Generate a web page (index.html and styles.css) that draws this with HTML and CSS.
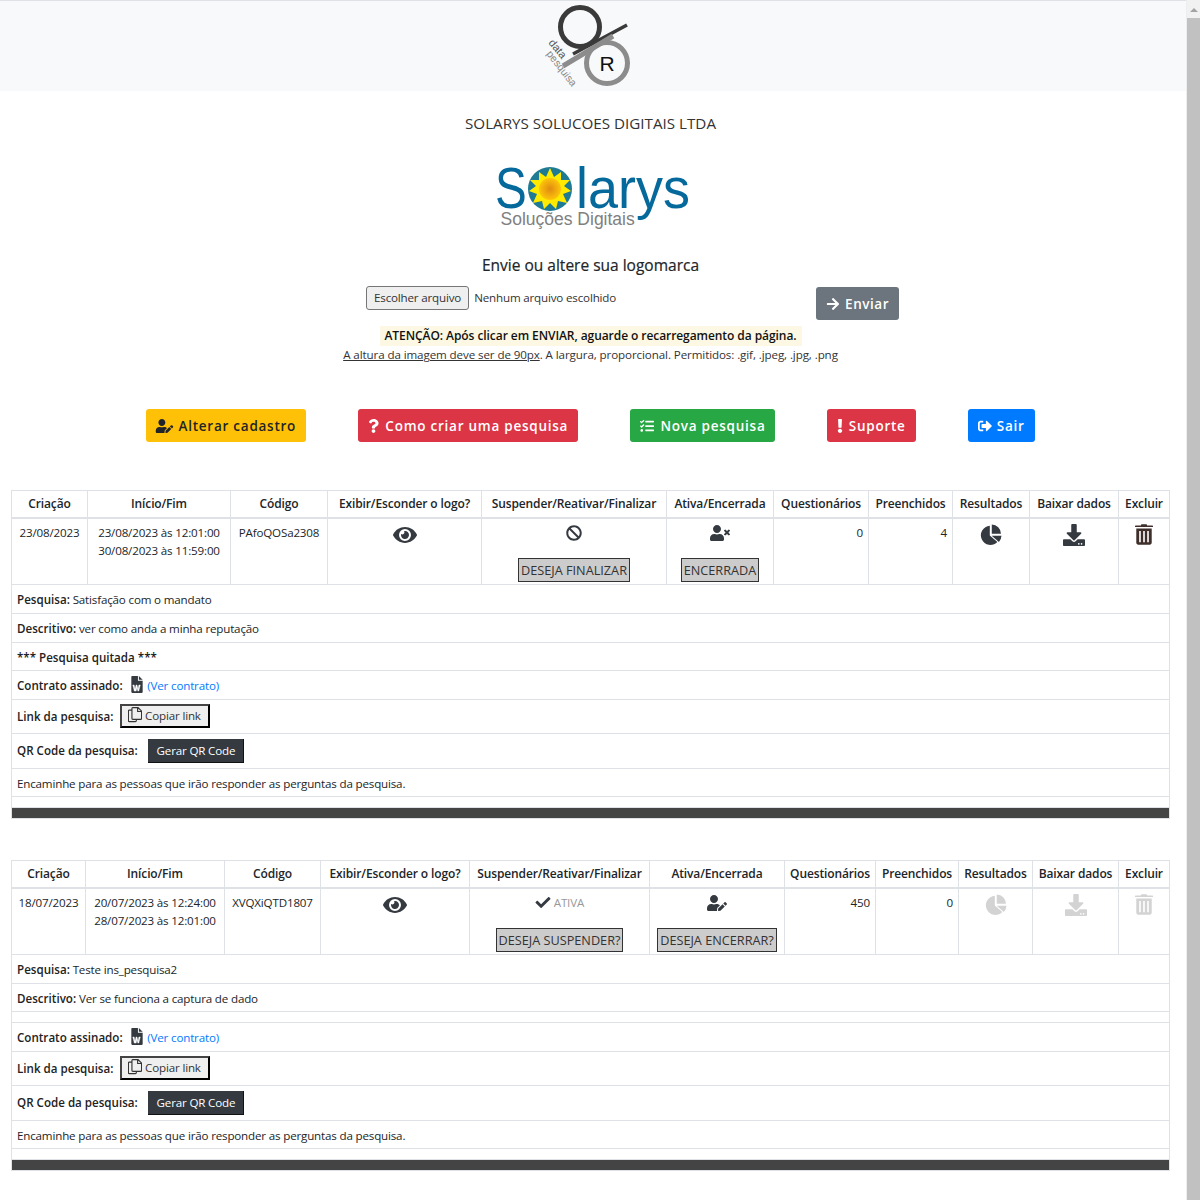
FILE: index.html
```html
<!DOCTYPE html>
<html lang="pt-BR">
<head>
    <meta charset="UTF-8">
    <title>Pesquisas</title>
    <link rel="stylesheet" href="styles.css">
</head>
<body>
    <svg class="icon-defs" width="0" height="0">
        <defs>
            <symbol id="i-eye" viewBox="0 0 576 512"><path d="M572.52 241.4C518.29 135.59 410.93 64 288 64S57.68 135.64 3.48 241.41a32.35 32.35 0 0 0 0 29.19C57.71 376.41 165.07 448 288 448s230.32-71.64 284.52-177.41a32.35 32.35 0 0 0 0-29.19zM288 400a144 144 0 1 1 144-144 143.93 143.93 0 0 1-144 144zm0-240a95.31 95.31 0 0 0-25.31 3.79 47.85 47.85 0 0 1-66.9 66.9A95.78 95.78 0 1 0 288 160z"/></symbol>
            <symbol id="i-ban" viewBox="0 0 512 512"><path d="M256 8C119.034 8 8 119.033 8 256s111.034 248 248 248 248-111.034 248-248S392.967 8 256 8zm130.108 117.892c65.448 65.448 70 165.481 20.677 235.637L150.47 105.216c70.204-49.356 170.226-44.735 235.638 20.676zM125.892 386.108c-65.448-65.448-70-165.481-20.677-235.637L361.53 406.784c-70.203 49.356-170.226 44.736-235.638-20.676z"/></symbol>
            <symbol id="i-user-times" viewBox="0 0 640 512"><path d="M589.6 240l45.6-45.6c6.3-6.3 6.3-16.5 0-22.8l-22.8-22.8c-6.3-6.3-16.5-6.3-22.8 0L544 194.4l-45.6-45.6c-6.3-6.3-16.5-6.3-22.8 0l-22.8 22.8c-6.3 6.3-6.3 16.5 0 22.8l45.6 45.6-45.6 45.6c-6.3 6.3-6.3 16.5 0 22.8l22.8 22.8c6.3 6.3 16.5 6.3 22.8 0l45.6-45.6 45.6 45.6c6.3 6.3 16.5 6.3 22.8 0l22.8-22.8c6.3-6.3 6.3-16.5 0-22.8L589.6 240zM224 256c70.7 0 128-57.3 128-128S294.7 0 224 0 96 57.3 96 128s57.3 128 128 128zm89.6 32h-16.7c-22.2 10.2-46.9 16-72.9 16s-50.6-5.8-72.9-16h-16.7C60.2 288 0 348.2 0 422.4V464c0 26.5 21.5 48 48 48h352c26.5 0 48-21.5 48-48v-41.6c0-74.2-60.2-134.4-134.4-134.4z"/></symbol>
            <symbol id="i-user-edit" viewBox="0 0 640 512"><path d="M224 256c70.7 0 128-57.3 128-128S294.7 0 224 0 96 57.3 96 128s57.3 128 128 128zm89.6 32h-16.7c-22.2 10.2-46.9 16-72.9 16s-50.6-5.8-72.9-16h-16.7C60.2 288 0 348.2 0 422.4V464c0 26.5 21.5 48 48 48h274.9c-2.4-6.8-3.4-14-2.6-21.3l6.8-60.9 1.2-11.1 7.9-7.9 77.3-77.3c-24.5-27.7-60-45.5-99.9-45.5zm45.3 145.3l-6.8 61c-1.1 10.2 7.5 18.8 17.6 17.6l60.9-6.8 137.9-137.9-71.7-71.7-137.9 137.8zM633 268.9L595.1 231c-9.3-9.3-24.5-9.3-33.8 0l-37.8 37.8-4.1 4.1 71.8 71.7 41.8-41.8c9.3-9.4 9.3-24.5 0-33.9z"/></symbol>
            <symbol id="i-pie" viewBox="0 0 512 512"><path d="M228 40A224 224 0 1 0 404 420L228 268zM274 12V226H488A216 216 0 0 0 274 12zM272 272L440 416A224 224 0 0 0 500 272z"/></symbol>
            <symbol id="i-download" viewBox="0 0 512 512"><path d="M216 0h80c13.3 0 24 10.7 24 24v168h87.7c17.8 0 26.7 21.5 14.1 34.1L269.7 378.3c-7.5 7.5-19.8 7.5-27.3 0L90.1 226.1c-12.6-12.6-3.7-34.1 14.1-34.1H192V24c0-13.3 10.7-24 24-24zm296 376v112c0 13.3-10.7 24-24 24H24c-13.3 0-24-10.7-24-24V376c0-13.3 10.7-24 24-24h146.7l49 49c20.1 20.1 52.5 20.1 72.6 0l49-49H488c13.3 0 24 10.7 24 24zm-124 88c0-11-9-20-20-20s-20 9-20 20 9 20 20 20 20-9 20-20zm64 0c0-11-9-20-20-20s-20 9-20 20 9 20 20 20 20-9 20-20z"/></symbol>
            <symbol id="i-trash" viewBox="0 0 448 512"><path fill-rule="evenodd" d="M160 0h128l16 32h128c9 0 16 7 16 16v24H0V48c0-9 7-16 16-16h128zM32 104h384v360c0 26-22 48-48 48H80c-26 0-48-22-48-48zM104 168v280h40V168zM204 168v280h40V168zM304 168v280h40V168z"/></symbol>
            <symbol id="i-check" viewBox="0 0 512 512"><path d="M173.898 439.404l-166.4-166.4c-9.997-9.997-9.997-26.206 0-36.204l36.203-36.204c9.997-9.998 26.207-9.998 36.204 0L192 312.69 432.095 72.596c9.997-9.997 26.207-9.997 36.204 0l36.203 36.204c9.997 9.997 9.997 26.206 0 36.204l-294.4 294.401c-9.998 9.997-26.207 9.997-36.204-.001z"/></symbol>
            <symbol id="i-question" viewBox="0 0 384 512"><path d="M202.021 0C122.202 0 70.503 32.703 29.914 91.026c-7.363 10.58-5.093 25.086 5.178 32.874l43.138 32.709c10.373 7.865 25.132 6.026 33.253-4.148 25.049-31.381 43.63-49.449 82.757-49.449 30.764 0 68.816 19.799 68.816 49.631 0 22.552-18.617 34.134-48.993 51.164-35.423 19.86-82.299 44.576-82.299 106.405V320c0 13.255 10.745 24 24 24h72.471c13.255 0 24-10.745 24-24v-5.773c0-42.86 125.268-44.645 125.268-160.627C377.504 66.256 286.902 0 202.021 0zM192 373.459c-38.196 0-69.271 31.075-69.271 69.271 0 38.195 31.075 69.27 69.271 69.27s69.271-31.075 69.271-69.271-31.075-69.27-69.271-69.27z"/></symbol>
            <symbol id="i-exclamation" viewBox="0 0 192 512"><path d="M176 432c0 44.112-35.888 80-80 80s-80-35.888-80-80 35.888-80 80-80 80 35.888 80 80zM25.26 25.199l13.6 272C39.499 309.972 50.041 320 62.83 320h66.34c12.789 0 23.331-10.028 23.97-22.801l13.6-272C167.425 11.49 156.496 0 142.77 0H49.23C35.504 0 24.575 11.49 25.26 25.199z"/></symbol>
            <symbol id="i-tasks" viewBox="0 0 512 512"><path d="M139.61 35.5a12 12 0 0 0-17 0L58.93 98.81l-22.7-22.12a12 12 0 0 0-17 0L3.53 92.41a12 12 0 0 0 0 17l47.59 47.4a12.78 12.78 0 0 0 17.61 0l15.59-15.62L156.52 69a12.09 12.09 0 0 0 .09-17zm0 159.19a12 12 0 0 0-17 0l-63.68 63.72-22.7-22.1a12 12 0 0 0-17 0L3.53 252a12 12 0 0 0 0 17L51 316.5a12.77 12.77 0 0 0 17.6 0l15.7-15.69 72.2-72.22a12 12 0 0 0 .09-16.9zM64 368c-26.49 0-48.59 21.5-48.59 48S37.53 464 64 464a48 48 0 0 0 0-96zm432 16H208a16 16 0 0 0-16 16v32a16 16 0 0 0 16 16h288a16 16 0 0 0 16-16v-32a16 16 0 0 0-16-16zm0-320H208a16 16 0 0 0-16 16v32a16 16 0 0 0 16 16h288a16 16 0 0 0 16-16V80a16 16 0 0 0-16-16zm0 160H208a16 16 0 0 0-16 16v32a16 16 0 0 0 16 16h288a16 16 0 0 0 16-16v-32a16 16 0 0 0-16-16z"/></symbol>
            <symbol id="i-arrow" viewBox="0 0 448 512"><path d="M190.5 66.9l22.2-22.2c9.4-9.4 24.6-9.4 33.9 0L441 239c9.4 9.4 9.4 24.6 0 33.9L246.6 467.3c-9.4 9.4-24.6 9.4-33.9 0l-22.2-22.2c-9.5-9.5-9.3-25 .4-34.3L311.4 296H24c-13.3 0-24-10.7-24-24v-32c0-13.3 10.7-24 24-24h287.4L190.9 101.2c-9.8-9.3-10-24.8-.4-34.3z"/></symbol>
            <symbol id="i-signout" viewBox="0 0 512 512"><path d="M497 273L329 441c-15 15-41 4.500-41-17v-96H152c-13.300 0-24-10.700-24-24v-96c0-13.300 10.700-24 24-24h136V88c0-21.400 25.900-32 41-17l168 168c9.300 9.400 9.300 24.600 0 34zM192 436v-40c0-6.600-5.400-12-12-12H96c-17.700 0-32-14.300-32-32V160c0-17.700 14.300-32 32-32h84c6.600 0 12-5.400 12-12V76c0-6.600-5.400-12-12-12H96c-53 0-96 43-96 96v192c0 53 43 96 96 96h84c6.600 0 12-5.400 12-12z"/></symbol>
            <symbol id="i-copy" viewBox="0 0 16 18"><path fill="none" stroke="currentColor" stroke-width="1.300" d="M4.500 3.500H1.500a1 1 0 0 0-1 1v11a1 1 0 0 0 1 1h7a1 1 0 0 0 1-1v-1M4.500 1.500a1 1 0 0 1 1-1h6l4 4v8.500a1 1 0 0 1-1 1h-9a1 1 0 0 1-1-1zM11 .5v4.500h4.500"/></symbol>
            <symbol id="i-word" viewBox="0 0 12 18"><path d="M0 1c0-.5.500-1 1-1h6v5h5v12c0 .5-.500 1-1 1H1c-.500 0-1-.500-1-1zM8 0l4 4H8z"/><path fill="#fff" stroke="#fff" stroke-width=".4" d="M1.500 9.500h1.500l.9 4.500 1.100-4.500h1l1.100 4.500.9-4.500h1.500l-1.600 6.500H6.900L6 12.500 5.100 16H3.100z"/></symbol>
        </defs>
    </svg>

    <div class="page">
        <div class="content">
            <header class="topbar">
                <svg class="qr-logo" viewBox="0 0 90 90" width="90" height="90">
                    <circle cx="62" cy="62" r="20.500" fill="none" stroke="#8c8c8c" stroke-width="5"/>
                    <circle cx="35" cy="26" r="19.500" fill="none" stroke="#3a3a3a" stroke-width="5"/>
                    <path d="M28 53L82 24" stroke="#3a3a3a" stroke-width="3.500"/>
                    <path d="M18 65L68 35" stroke="#8c8c8c" stroke-width="5"/>
                    <text class="qr-r" x="62" y="70">R</text>
                    <text class="qr-data" transform="translate(3 42) rotate(50)">data</text>
                    <text class="qr-pesq" transform="translate(1 53) rotate(52)">pesquisa</text>
                </svg>
            </header>

            <section class="company">
                <p class="company-name">SOLARYS SOLUCOES DIGITAIS LTDA</p>
                <div class="solarys">
                    <span class="sol-s">S</span>
                    <svg class="sun" viewBox="0 0 44 44" width="44" height="44">
                        <defs>
                            <radialGradient id="sunCore">
                                <stop offset="0" stop-color="#e08a10"/>
                                <stop offset="1" stop-color="#fdc50a"/>
                            </radialGradient>
                        </defs>
                        <circle cx="22" cy="22" r="22" fill="#1f7a94"/>
                        <polygon fill="#ffea00" points="22,1 26,10 33,5 33,13 42,13 36,19 43,24 35,27 39,36 30,34 28,42 22,36 16,42 14,34 5,36 9,27 1,24 8,19 2,13 11,13 11,5 18,10"/>
                        <circle cx="22" cy="22" r="11" fill="url(#sunCore)"/>
                    </svg>
                    <span class="sol-rest">larys</span>
                    <span class="sol-sub">Soluções Digitais</span>
                </div>
                <h2 class="upload-title">Envie ou altere sua logomarca</h2>
                <div class="upload-row">
                    <div class="file-field">
                        <button class="file-btn">Escolher arquivo</button>
                        <span>Nenhum arquivo escolhido</span>
                    </div>
                    <button class="btn btn-gray btn-send"><svg class="ico"><use href="#i-arrow"/></svg> Enviar</button>
                </div>
                <p class="warning"><b>ATENÇÃO: Após clicar em ENVIAR, aguarde o recarregamento da página.</b></p>
                <p class="rules"><u>A altura da imagem deve ser de 90px</u>. A largura, proporcional. Permitidos: .gif, .jpeg, .jpg, .png</p>
            </section>

            <nav class="actions">
                <button class="btn btn-yellow"><svg class="ico ico-wide"><use href="#i-user-edit"/></svg> Alterar cadastro</button>
                <button class="btn btn-red"><svg class="ico ico-q"><use href="#i-question"/></svg> Como criar uma pesquisa</button>
                <button class="btn btn-green"><svg class="ico ico-tasks"><use href="#i-tasks"/></svg> Nova pesquisa</button>
                <button class="btn btn-red"><svg class="ico ico-ex"><use href="#i-exclamation"/></svg> Suporte</button>
                <button class="btn btn-blue"><svg class="ico"><use href="#i-signout"/></svg> Sair</button>
            </nav>

            <table class="survey survey-a">
                <colgroup>
                    <col class="c1"><col class="c2"><col class="c3"><col class="c4"><col class="c5"><col class="c6"><col class="c7"><col class="c8"><col class="c9"><col class="c10"><col class="c11">
                </colgroup>
                <thead>
                    <tr>
                        <th>Criação</th><th>Início/Fim</th><th>Código</th><th>Exibir/Esconder o logo?</th><th>Suspender/Reativar/Finalizar</th><th>Ativa/Encerrada</th><th>Questionários</th><th>Preenchidos</th><th>Resultados</th><th>Baixar dados</th><th>Excluir</th>
                    </tr>
                </thead>
                <tbody>
                    <tr class="main-row">
                        <td class="center">23/08/2023</td>
                        <td class="center">23/08/2023 às 12:01:00<br>30/08/2023 às 11:59:00</td>
                        <td class="center">PAfoQOSa2308</td>
                        <td class="center"><svg class="big big-eye"><use href="#i-eye"/></svg></td>
                        <td class="center">
                            <svg class="mid"><use href="#i-ban"/></svg>
                            <button class="state">DESEJA FINALIZAR</button>
                        </td>
                        <td class="center">
                            <svg class="mid mid-wide"><use href="#i-user-times"/></svg>
                            <button class="state">ENCERRADA</button>
                        </td>
                        <td class="right">0</td>
                        <td class="right">4</td>
                        <td class="center"><svg class="big"><use href="#i-pie"/></svg></td>
                        <td class="center"><svg class="big"><use href="#i-download"/></svg></td>
                        <td class="center"><svg class="big big-trash"><use href="#i-trash"/></svg></td>
                    </tr>
                    <tr><td colspan="11"><b>Pesquisa:</b> Satisfação com o mandato</td></tr>
                    <tr><td colspan="11"><b>Descritivo:</b> ver como anda a minha reputação</td></tr>
                    <tr><td colspan="11"><b>*** Pesquisa quitada ***</b></td></tr>
                    <tr><td colspan="11"><b>Contrato assinado:</b> <svg class="word"><use href="#i-word"/></svg> <a class="link">(Ver contrato)</a></td></tr>
                    <tr><td colspan="11"><b>Link da pesquisa:</b> <button class="copy"><svg class="copy-ico"><use href="#i-copy"/></svg> Copiar link</button></td></tr>
                    <tr><td colspan="11"><b>QR Code da pesquisa:</b> <button class="qr">Gerar QR Code</button></td></tr>
                    <tr class="note"><td colspan="11">Encaminhe para as pessoas que irão responder as perguntas da pesquisa.</td></tr>
                    <tr class="blank"><td colspan="11"></td></tr>
                    <tr class="bar"><td colspan="11"></td></tr>
                </tbody>
            </table>

            <table class="survey survey-b">
                <colgroup>
                    <col class="c1"><col class="c2"><col class="c3"><col class="c4"><col class="c5"><col class="c6"><col class="c7"><col class="c8"><col class="c9"><col class="c10"><col class="c11">
                </colgroup>
                <thead>
                    <tr>
                        <th>Criação</th><th>Início/Fim</th><th>Código</th><th>Exibir/Esconder o logo?</th><th>Suspender/Reativar/Finalizar</th><th>Ativa/Encerrada</th><th>Questionários</th><th>Preenchidos</th><th>Resultados</th><th>Baixar dados</th><th>Excluir</th>
                    </tr>
                </thead>
                <tbody>
                    <tr class="main-row">
                        <td class="center">18/07/2023</td>
                        <td class="center">20/07/2023 às 12:24:00<br>28/07/2023 às 12:01:00</td>
                        <td class="center">XVQXiQTD1807</td>
                        <td class="center"><svg class="big big-eye"><use href="#i-eye"/></svg></td>
                        <td class="center">
                            <div class="ativa"><svg class="check"><use href="#i-check"/></svg> ATIVA</div>
                            <button class="state">DESEJA SUSPENDER?</button>
                        </td>
                        <td class="center">
                            <svg class="mid mid-wide"><use href="#i-user-edit"/></svg>
                            <button class="state">DESEJA ENCERRAR?</button>
                        </td>
                        <td class="right">450</td>
                        <td class="right">0</td>
                        <td class="center off"><svg class="big"><use href="#i-pie"/></svg></td>
                        <td class="center off"><svg class="big"><use href="#i-download"/></svg></td>
                        <td class="center off"><svg class="big big-trash"><use href="#i-trash"/></svg></td>
                    </tr>
                    <tr><td colspan="11"><b>Pesquisa:</b> Teste ins_pesquisa2</td></tr>
                    <tr><td colspan="11"><b>Descritivo:</b> Ver se funciona a captura de dado</td></tr>
                    <tr class="blank"><td colspan="11"></td></tr>
                    <tr><td colspan="11"><b>Contrato assinado:</b> <svg class="word"><use href="#i-word"/></svg> <a class="link">(Ver contrato)</a></td></tr>
                    <tr><td colspan="11"><b>Link da pesquisa:</b> <button class="copy"><svg class="copy-ico"><use href="#i-copy"/></svg> Copiar link</button></td></tr>
                    <tr><td colspan="11"><b>QR Code da pesquisa:</b> <button class="qr">Gerar QR Code</button></td></tr>
                    <tr class="note"><td colspan="11">Encaminhe para as pessoas que irão responder as perguntas da pesquisa.</td></tr>
                    <tr class="blank"><td colspan="11"></td></tr>
                    <tr class="bar"><td colspan="11"></td></tr>
                </tbody>
            </table>
        </div>

        <div class="scrollbar">
            <div class="scroll-up"></div>
            <div class="scroll-thumb"></div>
        </div>
    </div>
</body>
</html>
```

FILE: styles.css
```css
html, body {
    margin: 0;
    padding: 0;
    height: 1200px;
    overflow: hidden;
}
body {
    font-family: "Open Sans", "Noto Sans", sans-serif;
    font-size: 11.6px;
    letter-spacing: -.17px;
    line-height: 18px;
    color: #212529;
    background-color: #fff;
}
.icon-defs {
    position: absolute;
}
.page {
    display: flex;
    height: 1200px;
}
.content {
    flex: 1;
    min-width: 0;
}
.scrollbar {
    width: 14px;
    background-color: #f1f1f1;
    flex: none;
    border-left: 1px solid #eee;
    box-sizing: border-box;
}
.scroll-up {
    height: 18px;
    position: relative;
}
.scroll-up:after {
    content: "";
    position: absolute;
    left: 3px;
    top: 8px;
    border-left: 4px solid transparent;
    border-right: 4px solid transparent;
    border-bottom: 4px solid #a3a3a3;
}
.scroll-thumb {
    height: 1182px;
    background-color: #c1c1c1;
}

/* topo */
.topbar {
    height: 90px;
    background-color: #f8f9fa;
    border-top: 1px solid #dee2e6;
    display: flex;
    justify-content: center;
    padding-right: 6px;
}
.qr-logo {
    display: block;
}
.qr-r {
    font-family: "Liberation Sans", sans-serif;
    font-size: 21px;
    letter-spacing: 0;
    fill: #111;
    text-anchor: middle;
}
.qr-data {
    font-family: "Liberation Sans", sans-serif;
    font-size: 11px;
    letter-spacing: 0;
    fill: #555;
}
.qr-pesq {
    font-family: "Liberation Sans", sans-serif;
    font-size: 10.5px;
    letter-spacing: 0;
    fill: #888;
}

/* empresa */
.company {
    text-align: center;
    padding-right: 5px;
}
.company-name {
    margin: 0;
    padding-top: 21px;
    font-size: 15.2px;
    letter-spacing: 0;
    line-height: 22px;
    color: #333;
}
.solarys {
    position: relative;
    width: 210px;
    height: 101px;
    margin: 18px auto 0;
    padding-left: 9px;
    box-sizing: border-box;
    display: flex;
    justify-content: flex-start;
    align-items: flex-start;
    font-family: "Liberation Sans", sans-serif;
    font-size: 58px;
    letter-spacing: 0;
    line-height: 72px;
    color: #05699c;
}
.sol-s {
    transform: scaleX(.82);
    transform-origin: 0 50%;
}
.sol-rest {
    transform: scaleX(.93);
    transform-origin: 0 50%;
}
.sun {
    flex: none;
    margin: 15px 4px 0 -5px;
}
.sol-sub {
    position: absolute;
    left: 15px;
    top: 56px;
    font-size: 17.5px;
    line-height: 22px;
    color: #808080;
    white-space: nowrap;
}
.upload-title {
    margin: 0;
    padding-top: 1px;
    font-size: 15.5px;
    letter-spacing: 0;
    line-height: 22px;
    font-weight: 400;
    -webkit-text-stroke: .2px #212529;
}
.upload-row {
    display: flex;
    justify-content: flex-start;
    height: 46px;
    margin-top: 10px;
    padding-left: 366px;
}
.file-field {
    display: flex;
    align-items: flex-start;
    gap: 5px;
    width: 450px;
    text-align: left;
}
.file-btn {
    font: inherit;
    letter-spacing: inherit;
    height: 24px;
    padding: 0 7px;
    color: #333;
    background-color: #efefef;
    border: 1px solid #767676;
    border-radius: 3px;
}
.file-field span {
    line-height: 24px;
    color: #333;
}
.warning {
    margin: -6px 0 0;
}
.warning b {
    display: inline-block;
    padding: 1px 5px;
    background-color: #fcf8e3;
    color: #111;
    font-size: 12px;
    letter-spacing: -.07px;
    font-weight: 600;
}
.rules {
    margin: 0;
    letter-spacing: -.1px;
    color: #333;
}

/* botoes */
.btn {
    font-family: inherit;
    font-size: 13.5px;
    font-weight: 600;
    letter-spacing: .75px;
    line-height: 20px;
    height: 33px;
    padding: 0 9px 0 9px;
    border: 1px solid transparent;
    border-radius: 3px;
    color: #fff;
    white-space: nowrap;
}
.btn-gray { background-color: #6c757d; }
.btn-yellow { background-color: #ffc107; color: #212529; }
.btn-red { background-color: #dc3545; }
.btn-green { background-color: #28a745; }
.btn-blue { background-color: #007bff; }
.btn-send {
    margin-top: 1px;
    padding: 0 9px;
    letter-spacing: .55px;
}
.ico {
    width: 14px;
    height: 14px;
    margin-right: 1px;
    fill: currentColor;
    vertical-align: -2px;
}
.ico-wide { width: 19px; margin: 0 0 0 -1px; }
.ico-q { width: 11px; margin-right: 2px; }
.ico-tasks { margin-right: 2px; }
.ico-ex { width: 6px; }
.actions {
    display: flex;
    justify-content: center;
    gap: 52px;
    padding-right: 5px;
    margin-top: 45px;
    margin-bottom: 48px;
}

/* tabela */
.survey {
    table-layout: fixed;
    border-collapse: collapse;
    width: 1158px;
    margin: 0 0 41px 11px;
}
.survey th, .survey td {
    border: 1px solid #dee2e6;
    padding: 6px 5px 4px;
    line-height: 17.75px;
    overflow: visible;
    white-space: nowrap;
}
.survey th {
    font-size: 12px;
    letter-spacing: -.13px;
    font-weight: 600;
    text-align: center;
    padding: 4px 0;
    border-bottom: 2px solid #dee2e6;
    height: 18px;
}
.survey b {
    font-weight: 600;
    letter-spacing: 0;
    color: #222;
}
.center { text-align: center; }
.survey td.right { text-align: right; }
.survey .main-row td {
    vertical-align: top;
    height: 58px;
    padding-top: 5px;
    padding-bottom: 2px;
    line-height: 18px;
}
.survey .note td {
    padding-bottom: 3px;
}
.survey-a .c1 { width: 76px; }
.survey-a .c2 { width: 143px; }
.survey-a .c3 { width: 97px; }
.survey-a .c4 { width: 154px; }
.survey-a .c5 { width: 185px; }
.survey-a .c6 { width: 107px; }
.survey-a .c7 { width: 95px; }
.survey-a .c8 { width: 84px; }
.survey-a .c9 { width: 77px; }
.survey-a .c10 { width: 89px; }
.survey-a .c11 { width: 51px; }
.survey-b .c1 { width: 74px; }
.survey-b .c2 { width: 139px; }
.survey-b .c3 { width: 96px; }
.survey-b .c4 { width: 149px; }
.survey-b .c5 { width: 180px; }
.survey-b .c6 { width: 135px; }
.survey-b .c7 { width: 91px; }
.survey-b .c8 { width: 83px; }
.survey-b .c9 { width: 74px; }
.survey-b .c10 { width: 86px; }
.survey-b .c11 { width: 51px; }
.big {
    display: block;
    width: 22px;
    height: 22px;
    margin: 0 auto;
    fill: #343a40;
}
.big-eye { width: 24px; height: 22px; }
.big-trash { width: 18px; height: 21px; fill: #3f2f2a; }
.off .big { fill: #d3d3d3; }
.mid {
    display: block;
    width: 16px;
    height: 16px;
    margin: 1px auto 17px;
    fill: #343a40;
}
.mid-wide { width: 20px; }
.state {
    display: inline-block;
    font-family: inherit;
    font-size: 12.7px;
    letter-spacing: 0;
    height: 24px;
    line-height: 20px;
    padding: 0 2px;
    color: #333;
    background-color: #ccc;
    border: 1px solid #333;
    vertical-align: top;
}
.ativa {
    height: 16px;
    margin: 1px 0 17px;
    line-height: 16px;
    color: #999;
}
.check {
    width: 16px;
    height: 15px;
    fill: #343a40;
    vertical-align: -3px;
}
.word {
    width: 12px;
    height: 17px;
    margin: -1px 1px 0 6px;
    fill: #343a40;
    vertical-align: top;
}
.link {
    color: #007bff;
}
.copy {
    font: inherit;
    letter-spacing: inherit;
    height: 24px;
    margin: -2px 0 1px 4px;
    padding: 0 7px 0 6px;
    color: #333;
    background-color: #efefef;
    border: 2px solid;
    border-color: #444 #000 #000 #444;
    border-radius: 0;
    vertical-align: middle;
}
.copy-ico {
    width: 14px;
    height: 16px;
    vertical-align: -3px;
    color: #333;
}
.qr {
    font: inherit;
    letter-spacing: inherit;
    height: 24px;
    margin: -1px 0 1px 7px;
    padding: 0 9px;
    color: #fff;
    background-color: #343a40;
    border: 0;
    box-shadow: inset -1px -1px #111;
    vertical-align: middle;
}
.survey .blank td {
    height: 0;
    padding: 5px;
}
.survey .bar td {
    height: 10px;
    padding: 0;
    background-color: #444;
    border-top: 0;
}
```
